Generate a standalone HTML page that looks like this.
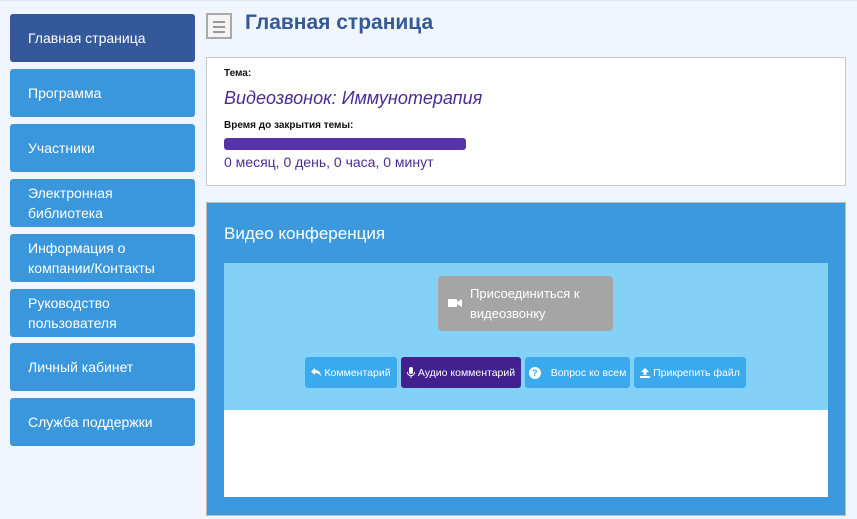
<!DOCTYPE html>
<html><head><meta charset="utf-8"><style>
*{box-sizing:border-box;margin:0;padding:0}
body{width:857px;height:519px;background:#f1f6fe;font-family:"Liberation Sans",sans-serif;position:relative;overflow:hidden}
.nav{position:absolute;left:10px;width:185px;background:#3a97dc;border-radius:3px;color:#fff;font-size:14px;padding-left:18px;display:flex;align-items:center;line-height:20px}
.nav.active{background:#33599a}
.abs{position:absolute}
.btn{position:absolute;top:357px;height:31px;background:#3aa9ee;border-radius:3px;color:#fff;font-size:10.5px;display:flex;align-items:center;justify-content:center;white-space:nowrap}
</style></head><body>
<div class="abs" style="left:0;top:0;width:857px;height:1px;background:#e2e6ee"></div>
<div class="nav active" style="top:14px;height:48px">Главная страница</div>
<div class="nav" style="top:69px;height:48px">Программа</div>
<div class="nav" style="top:124px;height:48px">Участники</div>
<div class="nav" style="top:179px;height:48px">Электронная<br>библиотека</div>
<div class="nav" style="top:234px;height:48px">Информация о<br>компании/Контакты</div>
<div class="nav" style="top:289px;height:48px">Руководство<br>пользователя</div>
<div class="nav" style="top:343px;height:48px">Личный кабинет</div>
<div class="nav" style="top:398px;height:48px">Служба поддержки</div>

<div class="abs" style="left:206px;top:13px;width:26px;height:26px;border:2px solid #aaa;background:#f4f4f4">
<div class="abs" style="left:5px;top:6px;width:12px;height:1.5px;background:#999"></div>
<div class="abs" style="left:5px;top:11px;width:12px;height:1.5px;background:#999"></div>
<div class="abs" style="left:5px;top:16px;width:12px;height:1.5px;background:#999"></div>
</div>
<div class="abs" style="left:245px;top:11px;font-size:21px;font-weight:bold;color:#33599a">Главная страница</div>

<div class="abs" style="left:206px;top:57px;width:640px;height:129px;background:#fff;border:1px solid #c8c8c8">
<div class="abs" style="left:17px;top:10px;font-size:10px;font-weight:bold;color:#111">Тема:</div>
<div class="abs" style="left:17px;top:30px;font-size:18px;font-style:italic;color:#4a2b96">Видеозвонок: Иммунотерапия</div>
<div class="abs" style="left:17px;top:62px;font-size:10px;font-weight:bold;color:#111">Время до закрытия темы:</div>
<div class="abs" style="left:17px;top:80px;width:242px;height:12px;background:#5533a8;border-radius:3px"></div>
<div class="abs" style="left:17px;top:96px;font-size:14px;color:#4a2b96">0 месяц, 0 день, 0 часа, 0 минут</div>
</div>

<div class="abs" style="left:206px;top:202px;width:640px;height:314px;background:#3c99dd;border:1px solid #bbb">
<div class="abs" style="left:17px;top:21px;font-size:17px;color:#fff">Видео конференция</div>
<div class="abs" style="left:17px;top:60px;width:604px;height:147px;background:#84d1f8"></div>
<div class="abs" style="left:17px;top:207px;width:604px;height:87px;background:#fff"></div>
</div>

<div class="abs" style="left:438px;top:276px;width:175px;height:55px;background:#a5a5a5;border-radius:4px;color:#fff;font-size:13px;line-height:20px">
<svg class="abs" style="left:10px;top:22px" width="14" height="10" viewBox="0 0 14 10"><rect x="0" y="1" width="9" height="8" rx="1" fill="#fff"/><path d="M9 4L14 1V9L9 6Z" fill="#fff"/></svg>
<div class="abs" style="left:32px;top:8px">Присоединиться к<br>видеозвонку</div>
</div>

<div class="btn" style="left:305px;width:92px"><svg width="10" height="9" viewBox="0 0 10 9" style="margin-right:3px"><path d="M4 0L0 3.5L4 7V5C7 5 9 6 10 9C10 5 8 2 4 2Z" fill="#fff"/></svg>Комментарий</div>
<div class="btn" style="left:401px;width:120px;background:#40218d"><svg width="8" height="11" viewBox="0 0 8 11" style="margin-right:3px"><rect x="2" y="0" width="4" height="7" rx="2" fill="#fff"/><path d="M0.5 5Q0.5 8.5 4 8.5Q7.5 8.5 7.5 5" stroke="#fff" fill="none"/><rect x="3.5" y="8.5" width="1" height="2.5" fill="#fff"/></svg>Аудио комментарий</div>
<div class="btn" style="left:525px;width:105px"><span style="display:inline-block;width:12px;height:12px;border-radius:6px;background:#fff;color:#3aa9ee;font-size:9px;font-weight:bold;text-align:center;line-height:12px;margin-right:10px">?</span>Вопрос ко всем</div>
<div class="btn" style="left:634px;width:112px"><svg width="10" height="10" viewBox="0 0 10 10" style="margin-right:3px"><path d="M5 0L1 4H3.5V7H6.5V4H9Z" fill="#fff"/><rect x="0" y="8" width="10" height="2" fill="#fff"/></svg>Прикрепить файл</div>
</body></html>
